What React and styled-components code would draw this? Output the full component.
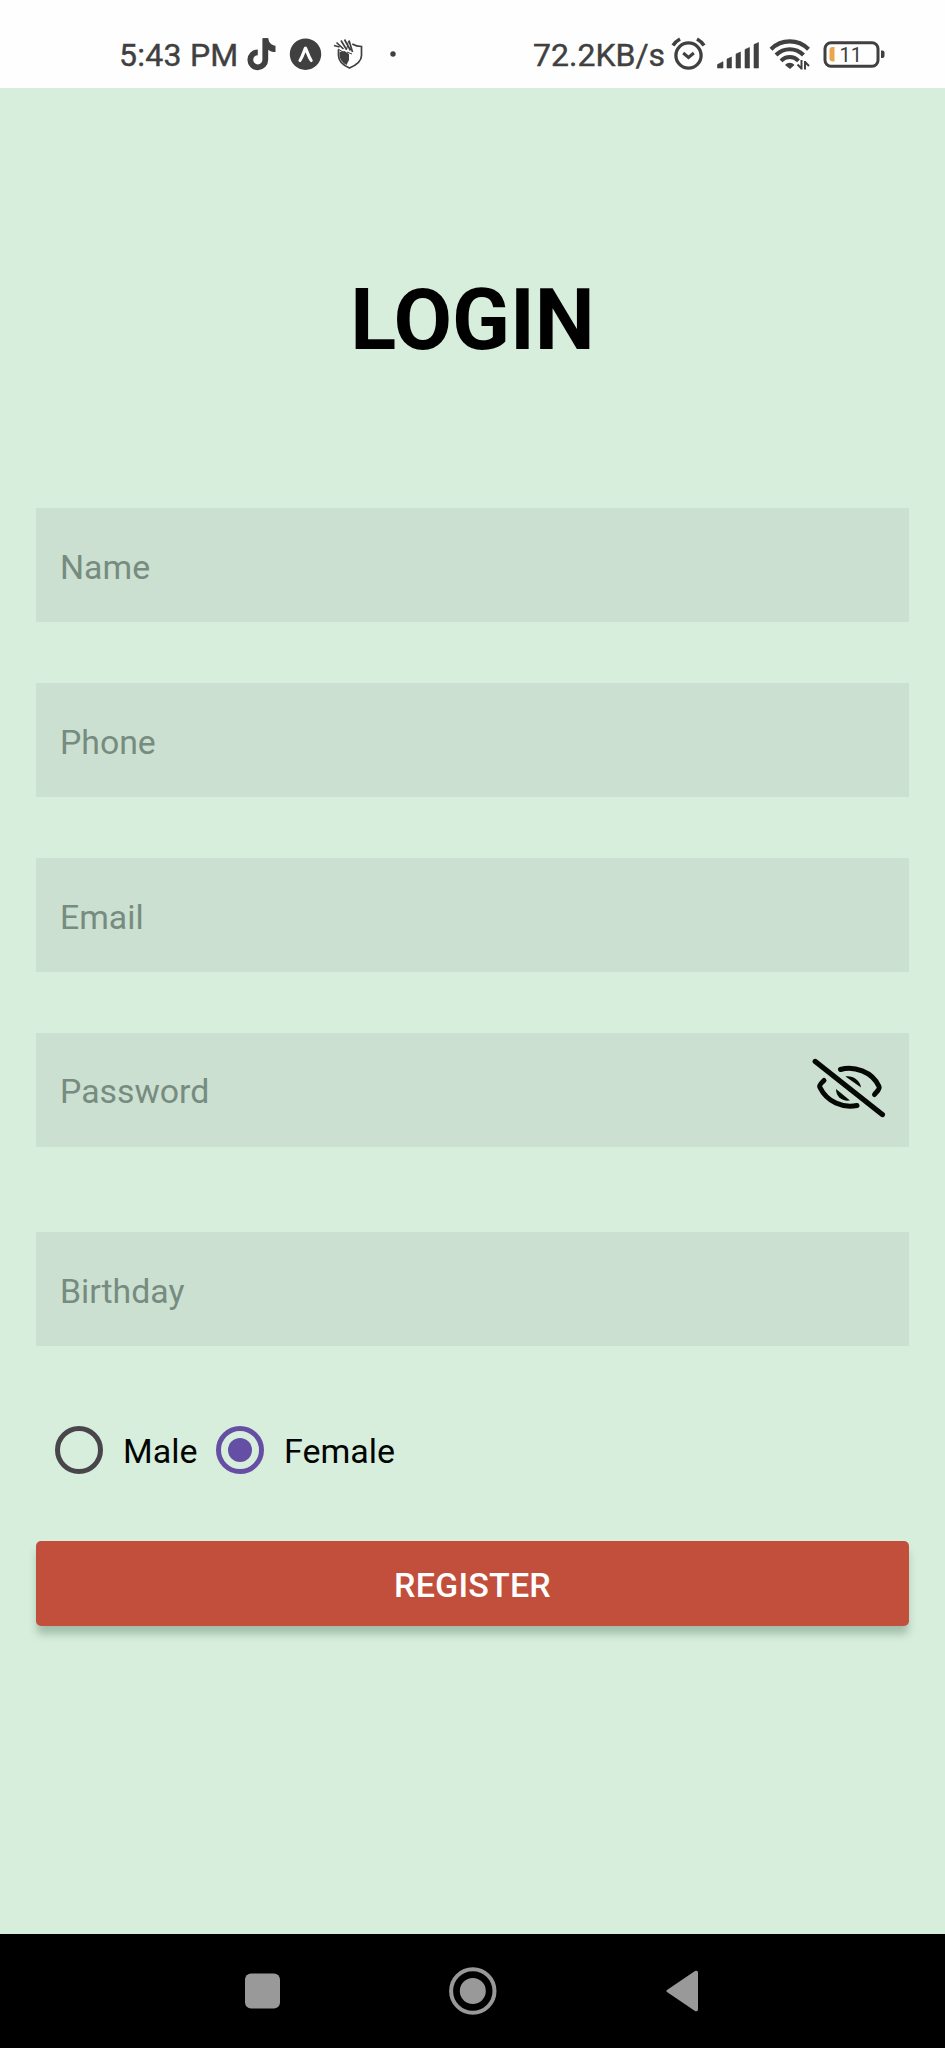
import React from "react";
import styled, { createGlobalStyle } from "styled-components";

const GlobalStyle = createGlobalStyle`
  * { box-sizing: border-box; }
  body { margin: 0; font-family: Roboto, "Liberation Sans", sans-serif; }
`;

const Screen = styled.div`
  width: 945px;
  height: 2048px;
  display: flex;
  flex-direction: column;
  background: #d8eedd;
`;

const StatusBar = styled.header`
  height: 88px;
  flex: none;
  display: flex;
  align-items: flex-start;
  padding: 34px 57px 0 119px;
  background: #fefefe;
  color: #404040;
`;

const StatusText = styled.span`
  width: ${(p) => p.$width}px;
  flex: none;
  font-size: 32px;
  line-height: 42px;
  letter-spacing: ${(p) => p.$spacing || 0}px;
  -webkit-text-stroke: 0.4px #404040;
  white-space: nowrap;
`;

const StatusGroup = styled.div`
  display: flex;
  margin-left: ${(p) => (p.$end ? "auto" : 0)};
`;

const StatusIcon = styled.svg`
  display: block;
  flex: none;
  height: 40px;
  margin-left: ${(p) => p.$gap || 0}px;
`;

const Main = styled.main`
  flex: 1;
  padding: 0 36px;
  display: flex;
  flex-direction: column;
`;

const Title = styled.h1`
  margin: 182px 0 0;
  height: 100px;
  font-size: 85px;
  line-height: 100px;
  font-weight: 700;
  text-align: center;
  color: #000;
`;

const Form = styled.form`
  display: flex;
  flex-direction: column;
  margin-top: 138px;
`;

const Field = styled.label`
  height: 114px;
  margin-bottom: ${(p) => p.$after || 61}px;
  padding: ${(p) => (p.$raised ? 3 : 5)}px 21px 0 24px;
  display: flex;
  align-items: center;
  justify-content: space-between;
  background: #cbe0d0;
  color: #778c80;
  font-size: 33.8px;
  line-height: 40px;
`;

const EyeIcon = styled.svg`
  width: 78px;
  height: 64px;
  margin-top: -10px;
`;

const RadioRow = styled.div`
  height: 48px;
  display: flex;
  align-items: center;
  padding-left: 19px;
`;

const Radio = styled.span`
  width: 48px;
  height: 48px;
  flex: none;
  display: flex;
  align-items: center;
  justify-content: center;
  border: 5px solid ${(p) => (p.$checked ? "#654fa4" : "#48464b")};
  border-radius: 50%;
`;

const RadioDot = styled.span`
  width: 24px;
  height: 24px;
  border-radius: 50%;
  background: #654fa4;
`;

const RadioLabel = styled.span`
  width: ${(p) => p.$width}px;
  padding: 1px 0 0 20px;
  font-size: 34px;
  line-height: 40px;
  color: #030503;
`;

const RegisterButton = styled.button`
  height: 85px;
  margin-top: 67px;
  padding: 3px 0 0;
  border: 0;
  border-radius: 5px;
  background: #c14f3c;
  color: #fff;
  font: 500 34px/40px Roboto, "Liberation Sans", sans-serif;
  letter-spacing: 0.2px;
  box-shadow: 0 9px 9px -1px rgba(50, 90, 65, 0.33);
`;

const NavBar = styled.nav`
  height: 114px;
  flex: none;
  display: flex;
  align-items: center;
  padding: 0 245px 0 243px;
  justify-content: space-between;
  background: #000;
`;

const NavIcon = styled.svg`
  display: block;
  height: 50px;
  fill: #999;
`;

const StatusLeft = () => (
  <StatusGroup>
    <StatusText $width={126} $spacing={0.25}>5:43 PM</StatusText>
    <StatusIcon width="34" viewBox="0 0 34 40" fill="none" stroke="#404040">
      <path d="M20.300 4.300v21.400a7.500 7.500 0 1 1-7.500-7.400" strokeWidth="5.800" />
      <path d="M18 4.300h5.200c.4 4.200 3 6.800 7.300 7.500v6.200c-3-.1-5.600-.9-8-2.600z" fill="#404040" stroke="none" />
    </StatusIcon>
    <StatusIcon $gap={10} width="34" viewBox="0 0 34 40">
      <circle cx="16.500" cy="20.200" r="15.700" fill="#404040" />
      <path d="M11 26.500c3-4.700 4.300-10.200 5.500-12.500 1.300 2.300 2.600 7.800 5.700 12.500" fill="none" stroke="#fefefe" strokeWidth="3.100" strokeLinecap="round" strokeLinejoin="round" />
    </StatusIcon>
    <StatusIcon $gap={10} width="34" viewBox="0 0 34 40" fill="none" stroke="#404040">
      <path d="M5.500 15.500v6c0 6 4.500 9.700 11 12.500 6.600-2.800 12-6.500 12-12.500v-9c-3.500 0-6.500-.8-9.200-2.500" strokeWidth="1.700" />
      <path d="M6.500 18l5-1 4.500 3v6l-2.500 5C9 28.500 6.500 25 6.500 21z" fill="#404040" stroke="none" />
      <path d="M1 11.500l5.500 1.500M3.500 8.500l7 6.500M8 6.500l5.500 9M11.500 5.500l6 11M16 6.500l3.500 11.500" strokeWidth="1.700" />
      <path d="M15.500 7l-2 9M5 15l5 3M14 18l5 2" strokeWidth="1" />
    </StatusIcon>
    <StatusIcon $gap={21} width="12" viewBox="0 0 12 40">
      <circle cx="5" cy="20" r="2.700" fill="#404040" />
    </StatusIcon>
  </StatusGroup>
);

const StatusRight = () => (
  <StatusGroup $end>
    <StatusText $width={138}>72.2KB/s</StatusText>
    <StatusIcon width="38" viewBox="0 0 38 40" fill="none" stroke="#404040">
      <circle cx="17.500" cy="21.500" r="12.600" strokeWidth="3.300" />
      <path d="M2 11.500c1.500-2.500 4-4.800 7-6.500M33 11.500c-1.500-2.500-4-4.800-7-6.500" strokeWidth="3.500" />
      <path d="M12.200 19l5.300 4.500 5.300-4.500" strokeWidth="3" />
    </StatusIcon>
    <StatusIcon $gap={6} width="46" viewBox="0 0 46 40" fill="#404040">
      <path d="M2.500 34v-3.500l5.500-2.800V34zM12 34V25l4.500-2v11zM21 34V20l4.500-2v16zM30 34V15.500l4.500-2V34zM39 34V10.500l4.500-2V34z" stroke="#404040" strokeWidth=".6" strokeLinejoin="round" />
    </StatusIcon>
    <StatusIcon $gap={8} width="44" viewBox="0 0 44 40" fill="none" stroke="#404040">
      <path d="M2 15.200c10.500-10.400 27-10.400 37.500 0" strokeWidth="4.200" />
      <path d="M7 21c8-7.700 19.500-7.700 27.500 0" strokeWidth="4.200" />
      <path d="M12 26.800c5-5 12.500-5 17.500 0" strokeWidth="4" />
      <path d="M16 31c3-3 6.500-3 9.500 0l-4.500 4z" fill="#404040" stroke="none" />
      <path d="M32.500 26v9.500M28.500 30.500l4 4M36 35.500V27M40 32l-4-4" strokeWidth="2" />
    </StatusIcon>
    <StatusIcon $gap={9} width="66" viewBox="0 0 66 40">
      <rect x="3" y="8.700" width="53" height="23.500" rx="6" fill="none" stroke="#404040" strokeWidth="3" />
      <path d="M12.500 13v14.500h-2a3 3 0 0 1-3-3v-8.500a3 3 0 0 1 3-3z" fill="#e9a64c" />
      <path d="M59 16.500h1.500a2 2 0 0 1 2 2v3.500a2 2 0 0 1-2 2H59z" fill="#404040" />
      <text x="17.500" y="28" fontSize="20" fill="#404040" fontFamily="Roboto">11</text>
    </StatusIcon>
  </StatusGroup>
);

const HiddenEye = () => (
  <EyeIcon viewBox="0 0 78 64" fill="none" stroke="#050805" strokeWidth="5" strokeLinecap="round">
    <path d="M5.300 6.500L72.300 59.500" strokeWidth="5.400" />
    <path d="M30.500 14.500c13-4 32 2 38.500 17 1.200 2.500-2 5-4.500 8" />
    <path d="M14 25.500c-2.500 2.500-5.500 4.500-4 7C17 47 33 53.500 47 50.500" />
    <path d="M35.500 21.500c7.500-1 14.500 4 15.500 11z" fill="#050805" stroke="none" />
    <path d="M26 34c0 8 6 12.500 14 11.500z" fill="#050805" stroke="none" />
  </EyeIcon>
);

export default function App() {
  return (
    <>
      <GlobalStyle />
      <Screen>
        <StatusBar>
          <StatusLeft />
          <StatusRight />
        </StatusBar>
        <Main>
          <Title>LOGIN</Title>
          <Form>
            <Field>Name</Field>
            <Field>Phone</Field>
            <Field>Email</Field>
            <Field $raised $after={85}>
              Password
              <HiddenEye />
            </Field>
            <Field $after={80}>Birthday</Field>
            <RadioRow>
              <Radio />
              <RadioLabel $width={113}>Male</RadioLabel>
              <Radio $checked>
                <RadioDot />
              </Radio>
              <RadioLabel $width={150}>Female</RadioLabel>
            </RadioRow>
            <RegisterButton type="button">REGISTER</RegisterButton>
          </Form>
        </Main>
        <NavBar>
          <NavIcon width="40" viewBox="0 0 40 50">
            <rect x="2" y="7.500" width="35" height="35" rx="6" />
          </NavIcon>
          <NavIcon width="50" viewBox="0 0 50 50">
            <circle cx="23.800" cy="25" r="21.700" fill="none" stroke="#999" strokeWidth="4" />
            <circle cx="23.800" cy="25" r="13" />
          </NavIcon>
          <NavIcon width="36" viewBox="0 0 36 50">
            <path d="M3 24q-1.500 1 0 2l28 19q3 1 3-1.500v-37q0-2.500-3-1.500z" />
          </NavIcon>
        </NavBar>
      </Screen>
    </>
  );
}
